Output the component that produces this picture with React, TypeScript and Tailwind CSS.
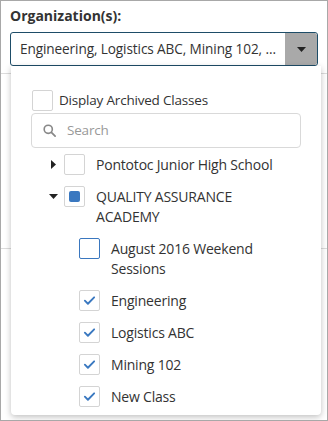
import { useState } from 'react'

type Node = {
  id: string
  label: string
  checked?: boolean
  partial?: boolean
  focused?: boolean
  open?: boolean
  children?: Node[]
}

const TREE: Node[] = [
  { id: 'pjhs', label: 'Pontotoc Junior High School', children: [] },
  {
    id: 'qaa',
    label: 'QUALITY ASSURANCE ACADEMY',
    partial: true,
    open: true,
    children: [
      { id: 'aug', label: 'August 2016 Weekend Sessions', focused: true },
      { id: 'eng', label: 'Engineering', checked: true },
      { id: 'log', label: 'Logistics ABC', checked: true },
      { id: 'min', label: 'Mining 102', checked: true },
      { id: 'new', label: 'New Class', checked: true },
    ],
  },
]

function Box({ checked, partial, focused }: { checked?: boolean; partial?: boolean; focused?: boolean }) {
  return (
    <span
      className={`flex-shrink-0 w-[21px] h-[21px] rounded-[2px] border bg-white flex items-center justify-center ${
        focused ? 'border-[#3a77bf]' : 'border-[#d4d4d4]'
      }`}
    >
      {partial && <span className="w-[11px] h-[11px] rounded-[2px] bg-[#3a78c0]" />}
      {checked && (
        <svg width="13" height="13" viewBox="0 0 14 14" fill="none">
          <path d="M2 7.2l3.3 3.3L12 3.6" stroke="#3a78c0" strokeWidth="2" strokeLinecap="round" strokeLinejoin="round" />
        </svg>
      )}
    </span>
  )
}

function Caret({ open }: { open?: boolean }) {
  return (
    <span className="w-[15px] flex-shrink-0 flex items-center justify-center h-[21px]">
      {open ? (
        <svg width="9" height="5" viewBox="0 0 9 5"><path d="M0 0h9L4.5 5z" fill="#222" /></svg>
      ) : (
        <svg width="5" height="9" viewBox="0 0 5 9"><path d="M0 0v9l5-4.5z" fill="#222" /></svg>
      )}
    </span>
  )
}

export default function App() {
  const [query, setQuery] = useState('')

  return (
    <div
      className="relative w-[328px] h-[421px] overflow-hidden bg-white border border-[#a8a8a8] text-[#333]"
      style={{ fontFamily: '"Open Sans", "Noto Sans", Arial, sans-serif' }}
    >
      {/* page behind the dropdown */}
      <div className="px-[9px] pt-[5px]">
        <div className="text-[14px] font-bold leading-[20px] text-[#333]">Organization(s):</div>
        <div className="mt-[6px] h-[34px] flex items-center rounded-[3px] border border-[#1e4d68] pl-[9px] overflow-hidden">
          <span className="flex-1 text-[13.6px] whitespace-nowrap overflow-hidden tracking-[-0.1px]">
            Engineering, Logistics ABC, Mining 102, ...
          </span>
          <span className="w-[32px] h-[32px] bg-[#a9a9a9] rounded-r-[2px] flex items-center justify-center">
            <svg width="9" height="5" viewBox="0 0 9 5"><path d="M0 0h9L4.5 5z" fill="#222" /></svg>
          </span>
        </div>
      </div>
      <div className="mt-[7px] border-t border-[#dcdcdc] h-[176px] border-b" />

      {/* dropdown */}
      <div className="absolute left-[10px] top-[65px] w-[310px] h-[349px] bg-white rounded-b-[4px] shadow-[0_2px_6px_rgba(0,0,0,0.25)] text-[14px] tracking-[-0.2px]">
        <label className="flex items-center gap-[6px] mt-[24px] ml-[21px] h-[21px] text-[13.5px]">
          <Box />
          <span>Display Archived Classes</span>
        </label>
        <div className="mx-[20px] mt-[2px] h-[35px] rounded-[4px] border border-[#d9d9d9] flex items-center pl-[10px]">
          <svg width="15" height="15" viewBox="0 0 24 24" fill="none">
            <circle cx="10" cy="10" r="6.5" stroke="#888" strokeWidth="2.6" />
            <path d="M15 15l6 6" stroke="#888" strokeWidth="2.8" strokeLinecap="round" />
          </svg>
          <input
            value={query}
            onChange={e => setQuery(e.target.value)}
            placeholder="Search"
            className="ml-[10px] flex-1 outline-none bg-transparent placeholder:text-[#999] text-[13.5px]"
          />
        </div>
        <div className="mt-[6px] ml-[35px] flex flex-col gap-[11px]">
          {TREE.map(node => (
            <div key={node.id} className="flex flex-col gap-[11px]">
              <div className="flex items-start">
                <Caret open={node.open} />
                <span className="ml-[3px]"><Box checked={node.checked} partial={node.partial} /></span>
                <span className="ml-[11px] leading-[20px] pt-[1px] w-[188px]">{node.label}</span>
              </div>
              {node.open &&
                node.children?.map(c => (
                  <div key={c.id} className="flex items-start pl-[33px]">
                    <Box checked={c.checked} focused={c.focused} />
                    <span className="ml-[11px] leading-[20px] pt-[1px] w-[175px]">{c.label}</span>
                  </div>
                ))}
            </div>
          ))}
        </div>
      </div>
    </div>
  )
}
